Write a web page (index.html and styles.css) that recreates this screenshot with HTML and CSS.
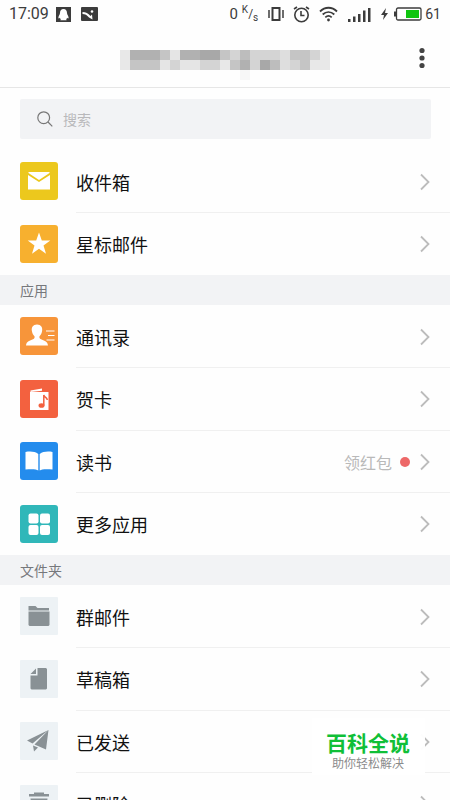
FILE: index.html
```html
<!DOCTYPE html>
<html lang="zh-CN">
<head>
<meta charset="utf-8">
<meta name="viewport" content="width=device-width, initial-scale=1">
<title>邮箱</title>
<link rel="stylesheet" href="styles.css">
</head>
<body>
<svg class="sprite" aria-hidden="true">
  <symbol id="chevron" viewBox="0 0 12 18"><path d="M2 1.500l7.500 7.500L2 16.500" fill="none" stroke="#bcbcbc" stroke-width="1.800"/></symbol>
</svg>
<div class="app">
  <div class="status">
    <span class="clock">17:09</span>
    <svg width="15" height="15" viewBox="0 0 15 15"><path fill="#3c3c3c" d="M0 0h15v15H0z"/><path fill="#fff" d="M7.500 2C5 2 4 3.800 4 6c0 1.500-1.600 3-1.600 4.800 0 1 .8.700 1.500 0 .2.800.6 1.200 1 1.600-.6.300-.8.900 0 .9h5.200c.8 0 .6-.6 0-.9.400-.4.800-.8 1-1.600.7.700 1.500 1 1.500 0C12.600 9 11 7.500 11 6c0-2.200-1-4-3.500-4z"/></svg>
    <svg class="gallery" width="17" height="14" viewBox="0 0 17 14"><rect width="17" height="14" rx="1" fill="#3c3c3c"/><path fill="#fff" d="M1.500 5C5 5 7 6.500 9.500 9L11 7.500 11.500 12.500 8 10.500C6 8 4 7 1.500 7z"/><circle cx="11" cy="4.500" r="1.300" fill="#fff"/></svg>
    <div class="status-right">
      <span class="speed">0</span>
      <span class="unit"><sup>K</sup>/<sub>s</sub></span>
      <svg class="vibrate" width="16" height="14" viewBox="0 0 16 14" fill="none" stroke="#3c3c3c"><path stroke-width="2" d="M4.500 1h7v12h-7z"/><path stroke-width="1.500" d="M1 3v8M15 3v8"/></svg>
      <svg class="alarm" width="17" height="17" viewBox="0 0 17 17" fill="none" stroke="#3c3c3c" stroke-width="1.600"><circle cx="8.500" cy="9" r="6.700"/><path d="M8 5v4.500h3.500M1 3l3-2M16 3l-3-2"/></svg>
      <svg class="wifi" width="19" height="16" viewBox="0 0 19 16" fill="none" stroke="#3c3c3c" stroke-width="1.800"><path d="M1 5.500c5-5 12-5 17 0M3.700 8.500c3.500-3.300 8-3.300 11.600 0M6.300 11.300c2-1.800 4.400-1.800 6.400 0"/><circle cx="9.500" cy="14" r="1.400" fill="#3c3c3c" stroke="none"/></svg>
      <svg class="signal" width="23" height="15" viewBox="0 0 23 15" fill="#3c3c3c"><path d="M0 12h2.500v3H0zM5 9.500h2.500V15H5zM10 7h2.500v8H10zM15 3.500h2.500V15H15zM20 1h2.500v14H20z"/></svg>
      <svg class="bolt" width="7" height="12" viewBox="0 0 7 12"><path fill="#3c3c3c" d="M5 0L0 7h3L2 12l5-7H4z"/></svg>
      <svg class="battery" width="28" height="14" viewBox="0 0 28 14"><rect x="2.500" y="1" width="24.500" height="12" rx="1.500" fill="#fff" stroke="#3c3c3c" stroke-width="1.300"/><path fill="#3c3c3c" d="M0 4.500h2v5H0z"/><path fill="#10c510" d="M12 3h13v8H12z"/></svg>
      <span class="percent">61</span>
    </div>
  </div>
  <header class="bar">
    <svg class="account" width="210" height="30" viewBox="0 0 21 3" shape-rendering="crispEdges" role="img" aria-label="账号">
      <path fill="#e8e8e8" d="M0 0h1v2H0zM20 0h1v2h-1zM19 1h1v1h-1zM10 1h1v1h-1z"/>
      <path fill="#b1b1b1" d="M1 0h3v1H1zM6 0h2v1H6zM12 1h1v1h-1z"/>
      <path fill="#c5c5c5" d="M4 0h1v1H4zM1 1h3v1H1zM10 0h1v1h-1zM11 1h1v1h-1zM17 0h2v1h-2zM18 1h1v1h-1z"/>
      <path fill="#e5e5e5" d="M5 0h1v1H5zM4 1h1v1H4zM6 1h2v1H6z"/>
      <path fill="#a8a8a8" d="M8 0h2v1H8zM14 1h1v1h-1z"/>
      <path fill="#bdbdbd" d="M12 0h1v1h-1zM15 1h1v1h-1z"/>
      <path fill="#d4d4d4" d="M5 1h1v1H5zM8 1h2v1H8zM11 0h1v1h-1zM13 0h3v1h-3zM13 1h1v1h-1zM17 1h1v1h-1zM19 0h1v1h-1z"/>
      <path fill="#dedede" d="M16 0h1v2h-1z"/>
      <path fill="#f7f7f7" d="M12 2h1v1h-1z"/>
    </svg>
    <button class="more" type="button" aria-label="更多"><svg width="6" height="22" viewBox="0 0 6 22" fill="#444"><circle cx="3" cy="3.500" r="2.600"/><circle cx="3" cy="11" r="2.600"/><circle cx="3" cy="18.500" r="2.600"/></svg></button>
  </header>
  <main>
    <label class="search">
      <svg width="16" height="16" viewBox="0 0 16 16" fill="none" stroke="#777" stroke-width="1.200"><circle cx="6.700" cy="6.700" r="5.900"/><path d="M11 11l4.300 4.300"/></svg>
      <input type="search" placeholder="搜索" aria-label="搜索">
    </label>
    <ul>
      <li><a href="#"><svg class="tile" viewBox="0 0 38 38"><rect width="38" height="38" rx="3" fill="#ecc81d"/><path fill="#fff" d="M8 13l11 7 11-7v14.500H8z"/><path fill="#fff" d="M8.500 10h21v1L19 18 8.500 11z"/></svg><span class="body"><span class="name">收件箱</span><svg class="chevron"><use href="#chevron"/></svg></span></a></li>
      <li><a href="#"><svg class="tile" viewBox="0 0 38 38"><rect width="38" height="38" rx="3" fill="#f7b02f"/><path fill="#fff" d="M19 7.500l2.800 8h8.500l-6.800 5 2.500 8.300-7-5-7 5 2.500-8.300-6.800-5h8.500z"/></svg><span class="body"><span class="name">星标邮件</span><svg class="chevron"><use href="#chevron"/></svg></span></a></li>
    </ul>
    <h2>应用</h2>
    <ul>
      <li><a href="#"><svg class="tile" viewBox="0 0 38 38"><rect width="38" height="38" rx="3" fill="#f7953a"/><path fill="#fff" d="M17 7.500c-4 0-6 3-5 7 .4 2 1.300 3.500 2.500 4.700.3 1.300 0 2.300-1.500 3-3 1.400-6.500 1.800-7 6.300h22c-.5-4.500-4-4.900-7-6.300-1.500-.7-1.800-1.700-1.500-3 1.200-1.200 2.100-2.700 2.500-4.700 1-4-1-7-5-7z"/><path stroke="#fff" stroke-width="1.200" d="M26 14h8.500M28 18.500h6.500M26.500 23h8"/></svg><span class="body"><span class="name">通讯录</span><svg class="chevron"><use href="#chevron"/></svg></span></a></li>
      <li><a href="#"><svg class="tile" viewBox="0 0 38 38"><rect width="38" height="38" rx="3" fill="#f3613f"/><path fill="#fff" d="M10.500 10.500L22 8.500v2.200L10.500 12zM10 12h18.500v18H10z"/><ellipse cx="21.500" cy="25.500" rx="3" ry="2.300" fill="#f3613f"/><path fill="none" stroke="#f3613f" stroke-width="1.500" d="M23.800 25.500V15c1 3 3 2 3.500 5"/></svg><span class="body"><span class="name">贺卡</span><svg class="chevron"><use href="#chevron"/></svg></span></a></li>
      <li><a href="#"><svg class="tile" viewBox="0 0 38 38"><rect width="38" height="38" rx="3" fill="#248ced"/><path fill="#fff" d="M5.500 10c5-.8 9.500-.5 12.800 2v16.500c-2-1.500-7-1.500-12.800-1zM32.500 10c-5-.8-9.500-.5-12.800 2v16.500c2-1.500 7-1.500 12.800-1z"/></svg><span class="body"><span class="name">读书</span><span class="note">领红包</span><i class="dot"></i><svg class="chevron"><use href="#chevron"/></svg></span></a></li>
      <li><a href="#"><svg class="tile" viewBox="0 0 38 38"><rect width="38" height="38" rx="3" fill="#30b7b9"/><g fill="#fff"><rect x="8.500" y="8.500" width="10" height="10" rx="2"/><rect x="20" y="8.500" width="10" height="10" rx="2"/><rect x="8.500" y="20" width="10" height="10" rx="2"/><rect x="20" y="20" width="10" height="10" rx="2"/></g></svg><span class="body"><span class="name">更多应用</span><svg class="chevron"><use href="#chevron"/></svg></span></a></li>
    </ul>
    <h2>文件夹</h2>
    <ul>
      <li><a href="#"><svg class="tile" viewBox="0 0 38 38"><rect width="38" height="38" rx="1" fill="#edf2f5"/><path fill="#899195" d="M8.500 9h7l2 2H29v2.500H8.500zM8.500 14.500h21V28l-1 1h-19l-1-1z"/></svg><span class="body"><span class="name">群邮件</span><svg class="chevron"><use href="#chevron"/></svg></span></a></li>
      <li><a href="#"><svg class="tile" viewBox="0 0 38 38"><rect width="38" height="38" rx="1" fill="#edf2f5"/><path fill="#899195" d="M17.500 8H26l1 1v19.500l-1 1H11.500l-1-1V15.500h7zM16 8.500V14h-5.500z"/></svg><span class="body"><span class="name">草稿箱</span><svg class="chevron"><use href="#chevron"/></svg></span></a></li>
      <li><a href="#"><svg class="tile" viewBox="0 0 38 38"><rect width="38" height="38" rx="1" fill="#edf2f5"/><path fill="#899195" d="M28.500 8L7 18.500l5.500 3zM28.500 8L26 27.500l-11.500-5zM13 23.500l5 2-4 4z"/></svg><span class="body"><span class="name">已发送</span><svg class="chevron"><use href="#chevron"/></svg></span></a></li>
      <li><a href="#"><svg class="tile" viewBox="0 0 38 38"><rect width="38" height="38" rx="1" fill="#edf2f5"/><path fill="#899195" d="M14 7.500h10v1.500h5v2.500H9V9h5zM10.500 13.500h17l-1.500 16H12z"/></svg><span class="body"><span class="name">已删除</span><svg class="chevron"><use href="#chevron"/></svg></span></a></li>
    </ul>
  </main>
  <aside class="stamp"><strong>百科全说</strong><span>助你轻松解决</span></aside>
</div>
</body>
</html>
```
FILE: styles.css
```css
* { box-sizing: border-box; }
body {
  margin: 0;
  background: #fefefe;
  color: #111;
  font-family: "Noto Sans CJK SC", sans-serif;
}
.sprite { display: none; }
svg { display: block; flex: none; }
.app {
  position: relative;
  display: flex;
  flex-direction: column;
  height: 100vh;
  overflow: hidden;
}
.status {
  display: flex;
  flex: none;
  align-items: center;
  height: 28px;
  padding: 0 9px;
  color: #3c3c3c;
  font: 16px/28px Roboto, sans-serif;
}
.clock { margin-right: 7px; }
.gallery { margin-left: 10px; }
.status-right {
  display: flex;
  align-items: center;
  margin-left: auto;
}
.speed { margin-right: 4px; font-size: 15px; }
.unit { font-size: 12px; }
.unit sup, .unit sub { font-size: 10px; line-height: 0; }
.vibrate { margin-left: 10px; }
.alarm { margin-left: 9px; }
.wifi { margin-left: 9px; }
.signal { margin-left: 10px; }
.bolt { margin-left: 10px; }
.battery { margin: 0 3px 0 6px; }
.percent { font-size: 14px; }
.bar {
  display: grid;
  grid-template-columns: 40px 1fr 40px;
  flex: none;
  align-items: center;
  height: 60px;
  padding: 0 8px;
  border-bottom: 1px solid #e6e6e6;
}
.account { grid-column: 2; justify-self: center; margin-top: 14px; }
.more {
  display: flex;
  justify-content: center;
  padding: 0;
  border: 0;
  background: none;
}
main { flex: 1; min-height: 0; overflow: hidden; }
.search {
  display: flex;
  align-items: center;
  gap: 10px;
  height: 40px;
  margin: 11px 19px 11px 20px;
  padding: 0 17px;
  border-radius: 2px;
  background: #f2f3f5;
}
.search input {
  flex: 1;
  min-width: 0;
  padding: 0;
  border: 0;
  outline: 0;
  background: none;
  font: 14px/20px "Noto Sans CJK SC", sans-serif;
}
.search input::placeholder { color: #b9b9bb; }
ul { margin: 0; padding: 0; list-style: none; }
li { height: 62px; }
li:nth-child(even) { height: 63px; }
li a {
  display: flex;
  align-items: center;
  gap: 18px;
  height: 100%;
  padding-left: 20px;
  color: inherit;
  text-decoration: none;
}
.tile { width: 38px; height: 38px; }
.body {
  display: flex;
  flex: 1;
  align-items: center;
  height: 100%;
  padding-right: 19px;
  border-top: 1px solid #f0f0f0;
}
li:first-child .body { border-top-color: transparent; }
.name { flex: 1; font-size: 18px; line-height: 28px; }
.note { color: #b9b9b9; font-size: 16px; line-height: 24px; }
.dot {
  width: 10px;
  height: 10px;
  margin: 0 9px 0 8px;
  border-radius: 50%;
  background: #ed6868;
}
.chevron { width: 12px; height: 18px; }
h2 {
  margin: 0;
  padding: 0 20px;
  background: #f2f3f5;
  color: #76787c;
  font-size: 14px;
  font-weight: 400;
  line-height: 30px;
}
.stamp {
  position: absolute;
  right: 25px;
  bottom: 25px;
  display: flex;
  flex-direction: column;
  align-items: center;
  padding: 10px 15px 5px 14px;
  background: #fffffff5;
}
.stamp strong { color: #10bf38; font-size: 21px; line-height: 28px; }
.stamp span { color: #8b8b8b; font-size: 12px; line-height: 14px; }
```
